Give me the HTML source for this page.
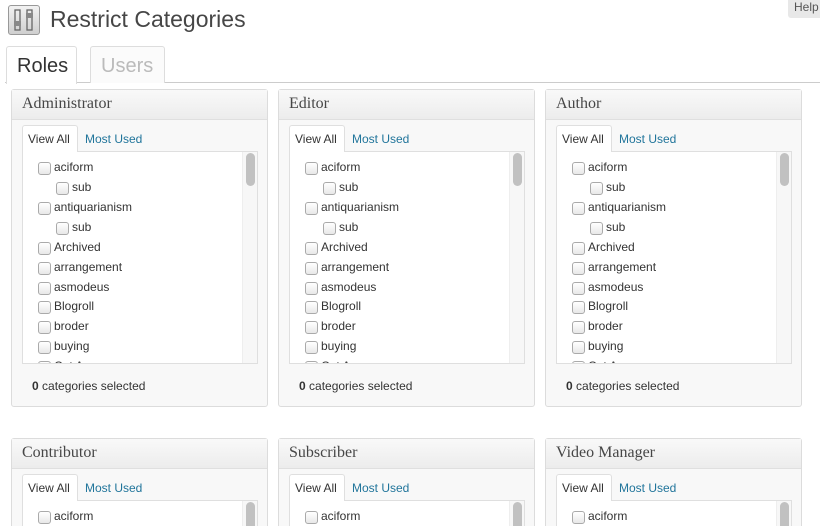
<!DOCTYPE html><html><head><style>
*{margin:0;padding:0;box-sizing:border-box}
html,body{width:820px;height:526px;overflow:hidden}
body{background:#fff;font-family:"Liberation Sans",sans-serif;color:#333;position:relative}
.ic{position:absolute;left:8px;top:5px;width:32px;height:30px;border:1px solid #999;border-radius:3px;background:linear-gradient(#f2f2f2,#cfcfcf)}
h1{position:absolute;left:50px;top:6px;font-weight:normal;font-size:23px;color:#464646}
.help{position:absolute;left:788px;top:0;width:40px;height:18px;background:#e8e8e8;border-radius:0 0 0 3px;font-size:12px;color:#555;padding:0 0 0 6px;line-height:14px}
.tabline{position:absolute;left:5px;top:82px;width:815px;border-top:1px solid #ccc}
.tab{position:absolute;top:46px;height:37px;border:1px solid #ddd;border-bottom:none;border-radius:3px 3px 0 0;font-size:20px;padding:8px 10px 0}
.box{position:absolute;width:257px;height:318px;border:1px solid #dcdcdc;border-radius:3px;background:#f8f8f8}
.hd{height:30px;border-bottom:1px solid #dfdfdf;background:linear-gradient(#f9f9f9,#ececec);font-family:"Liberation Serif",serif;font-size:16px;color:#464646;padding:5px 10px}
.va{position:absolute;left:10px;top:35px;width:56px;height:27px;background:#fff;border:1px solid #dfdfdf;border-bottom:none;border-radius:3px 3px 0 0;font-size:12px;padding:6px 0 0 5px;color:#333;z-index:2}
.mu{position:absolute;left:73px;top:42px;font-size:12px;color:#21759b}
.lst{position:absolute;left:10px;top:61px;width:236px;height:213px;background:#fff;border:1px solid #dfdfdf;overflow:hidden}
.sb{position:absolute;right:0;top:0;width:15px;height:100%;background:#f7f7f7;border-left:1px solid #eee}
.th{position:absolute;left:3px;top:1px;width:9px;height:33px;background:#c1c1c1;border-radius:5px}
.it{position:absolute;font-size:12px;height:14px;line-height:14px;margin-top:-1px}
.it:before{content:"";position:absolute;left:-16px;top:2px;width:11px;height:11px;border:1px solid #aaa;border-radius:3px;background:linear-gradient(#fff,#e8e8e8)}
.ft{position:absolute;left:20px;top:289px;font-size:12px}
</style></head><body>
<div class="ic"><svg width="30" height="28" viewBox="0 0 30 28"><rect x="6" y="4" width="5" height="20" fill="none" stroke="#666" stroke-width="1.3"/><rect x="18" y="4" width="5" height="20" fill="none" stroke="#666" stroke-width="1.3"/><rect x="5" y="15" width="7" height="5" fill="#888"/><rect x="17" y="7" width="7" height="5" fill="#888"/></svg></div>
<h1>Restrict Categories</h1>
<div class="help">Help</div>
<div class="tabline"></div>
<div class="tab" style="left:6px;width:71px;background:#fff;color:#333;height:38px;z-index:2">Roles</div>
<div class="tab" style="left:90px;width:75px;color:#bbb;background:#fbfbfb">Users</div>

<div class="box" style="left:11px;top:89px"><div class="hd">Administrator</div><div class="va">View All</div><div class="mu">Most Used</div>
<div class="lst"><div class="sb"><div class="th"></div></div>
<div class="it" style="left:31px;top:9px">aciform</div><div class="it" style="left:49px;top:29px">sub</div><div class="it" style="left:31px;top:49px">antiquarianism</div><div class="it" style="left:49px;top:69px">sub</div><div class="it" style="left:31px;top:89px">Archived</div><div class="it" style="left:31px;top:109px">arrangement</div><div class="it" style="left:31px;top:129px">asmodeus</div><div class="it" style="left:31px;top:148px">Blogroll</div><div class="it" style="left:31px;top:168px">broder</div><div class="it" style="left:31px;top:188px">buying</div><div class="it" style="left:31px;top:208px">Cat A</div></div>
<div class="ft"><b>0</b> categories selected</div></div>

<div class="box" style="left:278px;top:89px"><div class="hd">Editor</div><div class="va">View All</div><div class="mu">Most Used</div>
<div class="lst"><div class="sb"><div class="th"></div></div>
<div class="it" style="left:31px;top:9px">aciform</div><div class="it" style="left:49px;top:29px">sub</div><div class="it" style="left:31px;top:49px">antiquarianism</div><div class="it" style="left:49px;top:69px">sub</div><div class="it" style="left:31px;top:89px">Archived</div><div class="it" style="left:31px;top:109px">arrangement</div><div class="it" style="left:31px;top:129px">asmodeus</div><div class="it" style="left:31px;top:148px">Blogroll</div><div class="it" style="left:31px;top:168px">broder</div><div class="it" style="left:31px;top:188px">buying</div><div class="it" style="left:31px;top:208px">Cat A</div></div>
<div class="ft"><b>0</b> categories selected</div></div>

<div class="box" style="left:545px;top:89px"><div class="hd">Author</div><div class="va">View All</div><div class="mu">Most Used</div>
<div class="lst"><div class="sb"><div class="th"></div></div>
<div class="it" style="left:31px;top:9px">aciform</div><div class="it" style="left:49px;top:29px">sub</div><div class="it" style="left:31px;top:49px">antiquarianism</div><div class="it" style="left:49px;top:69px">sub</div><div class="it" style="left:31px;top:89px">Archived</div><div class="it" style="left:31px;top:109px">arrangement</div><div class="it" style="left:31px;top:129px">asmodeus</div><div class="it" style="left:31px;top:148px">Blogroll</div><div class="it" style="left:31px;top:168px">broder</div><div class="it" style="left:31px;top:188px">buying</div><div class="it" style="left:31px;top:208px">Cat A</div></div>
<div class="ft"><b>0</b> categories selected</div></div>

<div class="box" style="left:11px;top:438px"><div class="hd">Contributor</div><div class="va">View All</div><div class="mu">Most Used</div>
<div class="lst"><div class="sb"><div class="th"></div></div><div class="it" style="left:31px;top:9px">aciform</div></div></div>
<div class="box" style="left:278px;top:438px"><div class="hd">Subscriber</div><div class="va">View All</div><div class="mu">Most Used</div>
<div class="lst"><div class="sb"><div class="th"></div></div><div class="it" style="left:31px;top:9px">aciform</div></div></div>
<div class="box" style="left:545px;top:438px"><div class="hd">Video Manager</div><div class="va">View All</div><div class="mu">Most Used</div>
<div class="lst"><div class="sb"><div class="th"></div></div><div class="it" style="left:31px;top:9px">aciform</div></div></div>
</body></html>
